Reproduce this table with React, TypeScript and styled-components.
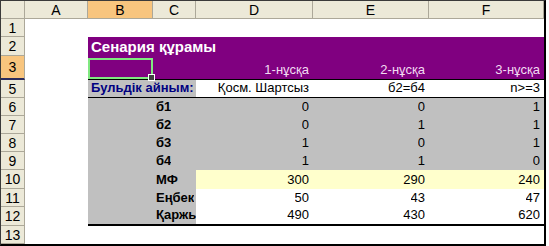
import React from 'react';
import styled, { createGlobalStyle } from 'styled-components';

const GlobalStyle = createGlobalStyle`
  html, body {
    margin: 0;
    background: #ffffff;
  }
`;

type Align = 'left' | 'right';

interface CellSpec {
  text?: string;
  span?: number;
  bg?: string;
  color?: string;
  bold?: boolean;
  title?: boolean;
  align?: Align;
  selected?: boolean;
}

interface RowSpec {
  num: number;
  cells: CellSpec[];
  rule?: string;
}

const PURPLE = '#800080';
const GREY = '#c0c0c0';
const CREAM = '#ffffcc';
const PALE = '#f2dcf2';
const WHITE = '#ffffff';

const COLUMNS = ['A', 'B', 'C', 'D', 'E', 'F'];

const blank = (n: number): CellSpec[] => Array.from({ length: n }, () => ({ bg: WHITE }));

const value = (text: string, bg: string): CellSpec => ({ text, bg, align: 'right' });

const label = (text: string): CellSpec => ({ text, bg: GREY, bold: true });

const ROWS: RowSpec[] = [
  { num: 1, cells: blank(6) },
  {
    num: 2,
    cells: [
      { bg: WHITE },
      { text: 'Сенария құрамы', span: 5, bg: PURPLE, color: WHITE, bold: true, title: true },
    ],
  },
  {
    num: 3,
    rule: '1px solid #000',
    cells: [
      { bg: WHITE },
      { bg: PURPLE, selected: true },
      { bg: PURPLE },
      { text: '1-нұсқа', bg: PURPLE, color: PALE, align: 'right' },
      { text: '2-нұсқа', bg: PURPLE, color: PALE, align: 'right' },
      { text: '3-нұсқа', bg: PURPLE, color: PALE, align: 'right' },
    ],
  },
  {
    num: 5,
    rule: '1px solid #000',
    cells: [
      { bg: WHITE },
      { text: 'Бульдік айным:', span: 2, bg: GREY, color: '#000080', bold: true },
      value('Қосм. Шартсыз', WHITE),
      value('б2=б4', WHITE),
      value('n>=3', WHITE),
    ],
  },
  { num: 6, cells: [{ bg: WHITE }, { bg: GREY }, label('б1'), value('0', GREY), value('0', GREY), value('1', GREY)] },
  { num: 7, cells: [{ bg: WHITE }, { bg: GREY }, label('б2'), value('0', GREY), value('1', GREY), value('1', GREY)] },
  { num: 8, cells: [{ bg: WHITE }, { bg: GREY }, label('б3'), value('1', GREY), value('0', GREY), value('1', GREY)] },
  { num: 9, cells: [{ bg: WHITE }, { bg: GREY }, label('б4'), value('1', GREY), value('1', GREY), value('0', GREY)] },
  { num: 10, cells: [{ bg: WHITE }, { bg: GREY }, label('МФ'), value('300', CREAM), value('290', CREAM), value('240', CREAM)] },
  { num: 11, cells: [{ bg: WHITE }, { bg: GREY }, label('Еңбек'), value('50', WHITE), value('43', WHITE), value('47', WHITE)] },
  {
    num: 12,
    rule: '2px solid #000',
    cells: [{ bg: WHITE }, { bg: GREY }, label('Қаржы'), value('490', WHITE), value('430', WHITE), value('620', WHITE)],
  },
  { num: 13, cells: blank(6) },
];

export default function App() {
  return (
    <>
      <GlobalStyle />
      <Sheet>
        <Corner />
        {COLUMNS.map((c) => (
          <ColHeader key={c} $active={c === 'B'}>
            {c}
          </ColHeader>
        ))}

        {ROWS.map((row) => (
          <React.Fragment key={row.num}>
            <RowHeader $active={row.num === 3}>{row.num}</RowHeader>
            {row.cells.map((cell, i) => (
              <Cell
                key={i}
                $span={cell.span ?? 1}
                $bg={cell.bg ?? WHITE}
                $align={cell.align ?? 'left'}
                $rule={i > 0 ? row.rule : undefined}
              >
                {cell.text && (
                  <CellText $color={cell.color ?? '#000000'} $bold={!!cell.bold} $title={!!cell.title}>
                    {cell.text}
                  </CellText>
                )}
                {cell.selected && (
                  <Selection>
                    <FillHandle />
                  </Selection>
                )}
              </Cell>
            ))}
          </React.Fragment>
        ))}
      </Sheet>
    </>
  );
}

const Sheet = styled.div`
  display: grid;
  grid-template-columns: 24px 63px 65px 43px 117px 116px 115px;
  grid-template-rows: 18px 18px 19px 24px 18px 18px 18px 18px 18px 19px 18px 19px 18px;
  width: max-content;
  border-top: 1px solid #3a3a3a;
  border-left: 1px solid #3a3a3a;
  border-right: 2px solid #000;
  border-bottom: 2px solid #000;

  font-family: 'Liberation Sans', Arial, sans-serif;
  font-size: 13px;
`;

const HeaderBase = styled.div<{ $active?: boolean }>`
  box-sizing: border-box;
  display: flex;
  align-items: center;
  justify-content: center;
  background: ${(p) => (p.$active ? '#f8c57e' : '#ece9d8')};
  border-right: 1px solid #aca899;
  border-bottom: 1px solid #aca899;
  color: #000;
  font-size: 14px;
`;

const Corner = styled(HeaderBase)``;

const ColHeader = styled(HeaderBase)`
  padding-top: 1px;
`;

const RowHeader = styled(HeaderBase)`
  border-bottom: ${(p) => (p.$active ? '2px solid #2c2c5c' : '1px solid #aca899')};
`;

// Left-aligned text runs right up to the cell edge and is clipped there, as in a sheet
const Cell = styled.div<{
  $span: number;
  $bg: string;
  $align: Align;
  $rule?: string;
}>`
  position: relative;
  box-sizing: border-box;
  grid-column: span ${(p) => p.$span};
  display: flex;
  align-items: flex-end;
  justify-content: ${(p) => (p.$align === 'right' ? 'flex-end' : 'flex-start')};
  padding: ${(p) => (p.$align === 'right' ? '0 4px 1px 2px' : '0 0 1px 3px')};
  min-width: 0;

  background: ${(p) => p.$bg};
  border-bottom: ${(p) => p.$rule ?? 'none'};
`;

const CellText = styled.span<{ $color: string; $bold: boolean; $title: boolean }>`
  overflow: hidden;
  white-space: nowrap;
  color: ${(p) => p.$color};
  font-weight: ${(p) => (p.$bold ? 700 : 400)};
  font-size: ${(p) => (p.$title ? '15px' : '13px')};
  line-height: 16px;
`;

const Selection = styled.div`
  position: absolute;
  z-index: 2;
  inset: 2px 0 0 0;
  border: 2px solid #80e880;
`;

const FillHandle = styled.div`
  position: absolute;
  right: -4px;
  bottom: -4px;
  width: 5px;
  height: 5px;
  background: #404040;
  border: 1px solid #ffffff;
`;
